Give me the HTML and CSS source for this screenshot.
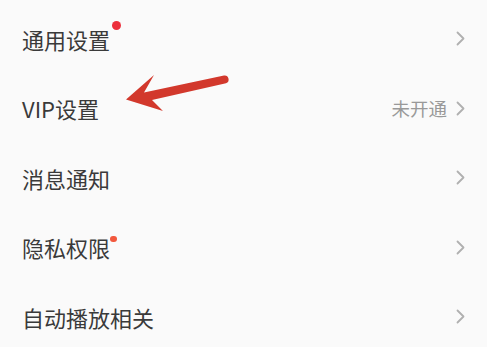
FILE: index.html
```html
<!DOCTYPE html>
<html lang="zh-CN">
<head>
<meta charset="utf-8">
<title>设置</title>
<link rel="stylesheet" href="styles.css">
</head>
<body>
<div class="page">
  <ul class="list">
    <li class="row">
      <span class="label">通用设置<i class="dot dot-big"></i></span>
      <span class="right"><svg class="chev" viewBox="0 0 9 15"><path d="M1.5 1.5 L7.5 7.5 L1.5 13.5"/></svg></span>
    </li>
    <li class="row">
      <span class="label">VIP设置</span>
      <span class="right"><span class="value">未开通</span><svg class="chev" viewBox="0 0 9 15"><path d="M1.5 1.5 L7.5 7.5 L1.5 13.5"/></svg></span>
    </li>
    <li class="row">
      <span class="label">消息通知</span>
      <span class="right"><svg class="chev" viewBox="0 0 9 15"><path d="M1.5 1.5 L7.5 7.5 L1.5 13.5"/></svg></span>
    </li>
    <li class="row">
      <span class="label">隐私权限<i class="dot dot-small"></i></span>
      <span class="right"><svg class="chev" viewBox="0 0 9 15"><path d="M1.5 1.5 L7.5 7.5 L1.5 13.5"/></svg></span>
    </li>
    <li class="row">
      <span class="label">自动播放相关</span>
      <span class="right"><svg class="chev" viewBox="0 0 9 15"><path d="M1.5 1.5 L7.5 7.5 L1.5 13.5"/></svg></span>
    </li>
  </ul>
  <svg class="arrow" viewBox="0 0 487 347" width="487" height="347">
    <path d="M126 99.5 L154 75 L144 92.5 L224 75.5 A4 4 0 0 1 226 83.2 L152 100 L163 111 Z"/>
  </svg>
</div>
</body>
</html>
```
FILE: styles.css
```css
html, body {
  margin: 0;
  padding: 0;
  background: #fafafa;
}
.page {
  position: relative;
  width: 487px;
  height: 347px;
  overflow: hidden;
  font-family: "Noto Sans CJK SC", "Noto Sans", sans-serif;
  color: #3a3a3a;
}
.list {
  list-style: none;
  margin: 0;
  padding: 3.75px 0 0 0;
}
.row {
  height: 69.5px;
  display: flex;
  align-items: center;
  justify-content: space-between;
  padding: 0 22px 0 22px;
  box-sizing: border-box;
}
.label {
  position: relative;
  font-size: 22px;
  line-height: 22px;
}
.dot {
  position: absolute;
  border-radius: 50%;
}
.dot-big {
  width: 9px;
  height: 9px;
  background: #ec2f3b;
  left: calc(100% + 2px);
  top: -6.5px;
}
.dot-small {
  width: 6.5px;
  height: 6.5px;
  background: #f2583d;
  left: calc(100% + 0px);
  top: -0.5px;
}
.right {
  display: flex;
  align-items: center;
  gap: 9px;
}
.value {
  font-size: 18.5px;
  line-height: 19px;
  color: #999999;
}
.chev {
  width: 9px;
  height: 15px;
  display: block;
}
.chev path {
  fill: none;
  stroke: #b0b0b0;
  stroke-width: 1.8;
  stroke-linecap: round;
  stroke-linejoin: round;
}
.arrow {
  position: absolute;
  left: 0;
  top: 0;
  pointer-events: none;
}
.arrow path {
  fill: #d2382c;
}
```
